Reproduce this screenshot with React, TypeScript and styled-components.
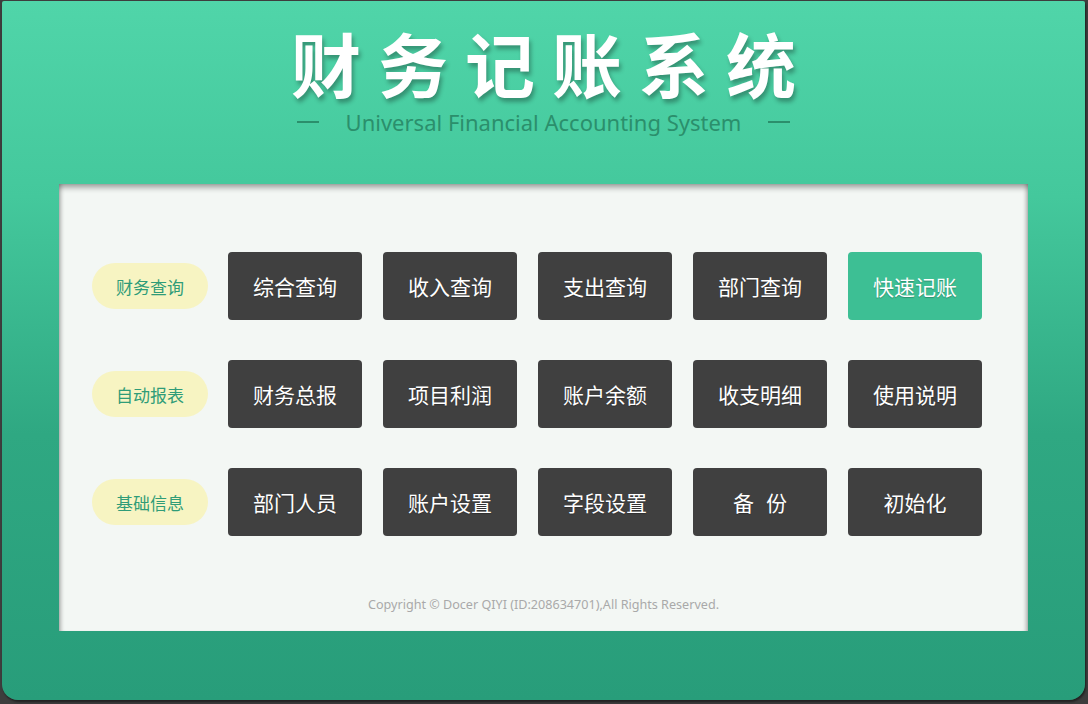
import React from 'react';
import styled, {createGlobalStyle} from 'styled-components';

// Page-wide reset: dark backdrop behind the green card
const GlobalStyle = createGlobalStyle`
  html, body {
    margin: 0;
    padding: 0;
    width: 1088px;
    height: 704px;
    overflow: hidden;
    background: #3d3d3d;
    font-family: "Noto Sans", "Noto Sans CJK SC", sans-serif;
  }
`;

const Card = styled.div`
  margin: 1px 0 0 2px;
  width: 1083px;
  height: 699px;
  border-radius: 2px 2px 16px 16px;
  background: linear-gradient(180deg, #50d5a9 0%, #44c89c 28%, #2fa882 62%, #289d7a 100%);
  box-shadow: 1px 2px 2px rgba(0, 0, 0, 0.45);
  display: flex;
  flex-direction: column;
`;

const Header = styled.header`
  height: 183px;
  box-sizing: border-box;
  padding-top: 27px;
  display: flex;
  flex-direction: column;
  align-items: center;
`;

const Title = styled.h1`
  margin: 0;
  padding-left: 17px;
  font-family: "Noto Sans CJK SC", sans-serif;
  font-size: 70px;
  line-height: 70px;
  font-weight: 700;
  letter-spacing: 17px;
  color: #ffffff;
  text-shadow: 2px 4px 4px rgba(0, 0, 0, 0.3);
`;

const Subtitle = styled.div`
  margin-top: 10px;
  display: flex;
  align-items: center;
  gap: 27px;
  font-family: "Noto Sans", sans-serif;
  font-size: 22px;
  line-height: 28px;
  color: #2b8f6c;
`;

const Dash = styled.span`
  display: block;
  width: 22px;
  height: 1.5px;
  background: #2b8f6c;
`;

const Panel = styled.main`
  margin-left: 57px;
  width: 969px;
  height: 447px;
  box-sizing: border-box;
  padding: 68px 0 16px 33px;
  background: #f3f7f4;
  box-shadow: inset 0 5px 6px -2px rgba(0, 0, 0, 0.4),
    inset 5px 0 5px -4px rgba(0, 0, 0, 0.3),
    inset -5px 0 5px -4px rgba(0, 0, 0, 0.3);
  display: flex;
  flex-direction: column;
  gap: 40px;
`;

const Row = styled.div`
  display: flex;
  align-items: center;
`;

const Label = styled.div`
  width: 116px;
  height: 46px;
  margin-right: 20px;
  border-radius: 23px;
  background: #f7f4c2;
  color: #2f9c78;
  font-family: "Noto Sans CJK SC", sans-serif;
  font-size: 17px;
  display: flex;
  align-items: center;
  justify-content: center;
`;

const Buttons = styled.div`
  display: flex;
  gap: 21px;
`;

const Button = styled.button<{$accent?: boolean}>`
  width: 134px;
  height: 68px;
  border: none;
  border-radius: 4px;
  padding: 0;
  background: ${(p) => (p.$accent ? '#3dbf94' : '#404040')};
  color: #ffffff;
  font-family: "Noto Sans CJK SC", sans-serif;
  font-size: 21px;
  white-space: pre;
  text-shadow: 0 1px 1px rgba(0, 0, 0, 0.25);
  cursor: pointer;
`;

const Footer = styled.footer`
  margin-top: auto;
  margin-left: -33px;
  text-align: center;
  font-family: "Noto Sans", sans-serif;
  font-size: 12.6px;
  line-height: 20px;
  color: #a9a9a9;
`;

const rows: {label: string; items: string[]; accent?: number}[] = [
  {label: '财务查询', items: ['综合查询', '收入查询', '支出查询', '部门查询', '快速记账'], accent: 4},
  {label: '自动报表', items: ['财务总报', '项目利润', '账户余额', '收支明细', '使用说明']},
  {label: '基础信息', items: ['部门人员', '账户设置', '字段设置', '备\u2002\u200a份', '初始化']},
];

const App: React.FC = () => (
  <>
    <GlobalStyle />
    <Card>
      <Header>
        <Title>财务记账系统</Title>
        <Subtitle>
          <Dash />
          Universal Financial Accounting System
          <Dash />
        </Subtitle>
      </Header>
      <Panel>
        {rows.map((row) => (
          <Row key={row.label}>
            <Label>{row.label}</Label>
            <Buttons>
              {row.items.map((item, i) => (
                <Button key={item} $accent={row.accent === i}>
                  {item}
                </Button>
              ))}
            </Buttons>
          </Row>
        ))}
        <Footer>Copyright © Docer QIYI (ID:208634701),All Rights Reserved.</Footer>
      </Panel>
    </Card>
  </>
);

export default App;
